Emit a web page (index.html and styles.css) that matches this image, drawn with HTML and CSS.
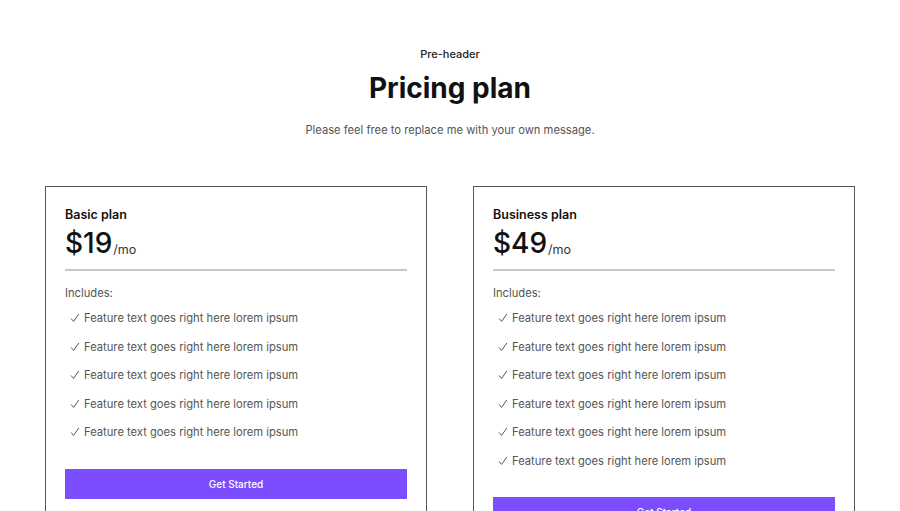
FILE: index.html
```html
<!DOCTYPE html>
<html>
<head>
<meta charset="utf-8">
<link rel="stylesheet" href="styles.css">
</head>
<body>
<section class="pricing">
  <header class="intro">
    <p class="pre">Pre-header</p>
    <h1 class="title">Pricing plan</h1>
    <p class="sub">Please feel free to replace me with your own message.</p>
  </header>
  <div class="cards">
    <div class="card">
      <h2 class="plan">Basic plan</h2>
      <div class="price"><span class="amount">$19</span><span class="per">/mo</span></div>
      <hr class="divider">
      <p class="includes">Includes:</p>
      <ul class="features">
        <li><svg class="check" viewBox="0 0 10 10"><polyline points="1,5.5 3.6,8.4 8.8,1"/></svg>Feature text goes right here lorem ipsum</li>
        <li><svg class="check" viewBox="0 0 10 10"><polyline points="1,5.5 3.6,8.4 8.8,1"/></svg>Feature text goes right here lorem ipsum</li>
        <li><svg class="check" viewBox="0 0 10 10"><polyline points="1,5.5 3.6,8.4 8.8,1"/></svg>Feature text goes right here lorem ipsum</li>
        <li><svg class="check" viewBox="0 0 10 10"><polyline points="1,5.5 3.6,8.4 8.8,1"/></svg>Feature text goes right here lorem ipsum</li>
        <li><svg class="check" viewBox="0 0 10 10"><polyline points="1,5.5 3.6,8.4 8.8,1"/></svg>Feature text goes right here lorem ipsum</li>
      </ul>
      <button class="cta">Get Started</button>
    </div>
    <div class="card">
      <h2 class="plan">Business plan</h2>
      <div class="price"><span class="amount">$49</span><span class="per">/mo</span></div>
      <hr class="divider">
      <p class="includes">Includes:</p>
      <ul class="features">
        <li><svg class="check" viewBox="0 0 10 10"><polyline points="1,5.5 3.6,8.4 8.8,1"/></svg>Feature text goes right here lorem ipsum</li>
        <li><svg class="check" viewBox="0 0 10 10"><polyline points="1,5.5 3.6,8.4 8.8,1"/></svg>Feature text goes right here lorem ipsum</li>
        <li><svg class="check" viewBox="0 0 10 10"><polyline points="1,5.5 3.6,8.4 8.8,1"/></svg>Feature text goes right here lorem ipsum</li>
        <li><svg class="check" viewBox="0 0 10 10"><polyline points="1,5.5 3.6,8.4 8.8,1"/></svg>Feature text goes right here lorem ipsum</li>
        <li><svg class="check" viewBox="0 0 10 10"><polyline points="1,5.5 3.6,8.4 8.8,1"/></svg>Feature text goes right here lorem ipsum</li>
        <li><svg class="check" viewBox="0 0 10 10"><polyline points="1,5.5 3.6,8.4 8.8,1"/></svg>Feature text goes right here lorem ipsum</li>
      </ul>
      <button class="cta">Get Started</button>
    </div>
  </div>
</section>
</body>
</html>
```
FILE: styles.css
```css
html, body {
  margin: 0;
  padding: 0;
  background: #fff;
}
body {
  font-family: Inter, "Noto Sans", sans-serif;
  color: #111;
}
.pricing {
  padding: 46px 45px 40px;
}
.intro {
  text-align: center;
}
.pre {
  margin: 0;
  font-size: 11px;
  line-height: 16px;
  font-weight: 500;
  color: #222;
}
.title {
  margin: 8px 0 0;
  font-size: 28px;
  line-height: 36px;
  font-weight: 700;
  color: #111;
}
.sub {
  margin: 16px 0 0;
  font-size: 11.2px;
  line-height: 16px;
  color: #555;
}
.cards {
  display: flex;
  gap: 46px;
  align-items: flex-start;
  margin-top: 48px;
}
.card {
  flex: 1;
  border: 1px solid #555;
  padding: 19px 19px 30px;
  display: flex;
  flex-direction: column;
}
.plan {
  margin: 0;
  font-size: 12.5px;
  line-height: 18px;
  font-weight: 600;
  color: #111;
}
.price {
  margin-top: 2px;
  display: flex;
  align-items: baseline;
  line-height: 34px;
}
.amount {
  font-size: 28px;
  font-weight: 500;
  color: #111;
}
.per {
  font-size: 12.5px;
  color: #333;
  margin-left: 1px;
  position: relative;
  top: 1px;
}
.divider {
  margin: 3px 0 0;
  border: 0;
  height: 2px;
  background: #c8c8c8;
}
.includes {
  margin: 14px 0 0;
  font-size: 11.2px;
  line-height: 16px;
  color: #555;
}
.features {
  list-style: none;
  margin: 3px 0 0;
  padding: 0 0 0 5px;
}
.features li {
  display: flex;
  align-items: center;
  font-size: 11.2px;
  line-height: 16px;
  color: #555;
  padding: 6px 0 6.5px;
}
.check {
  width: 10px;
  height: 10px;
  margin-right: 4px;
  fill: none;
  stroke: #555;
  stroke-width: 1;
  flex: none;
}
.cta {
  margin-top: 22px;
  height: 30px;
  border: 0;
  background: #7c4dff;
  color: #fff;
  font-family: Inter, "Noto Sans", sans-serif;
  font-size: 10px;
  font-weight: 500;
  cursor: pointer;
}
```
